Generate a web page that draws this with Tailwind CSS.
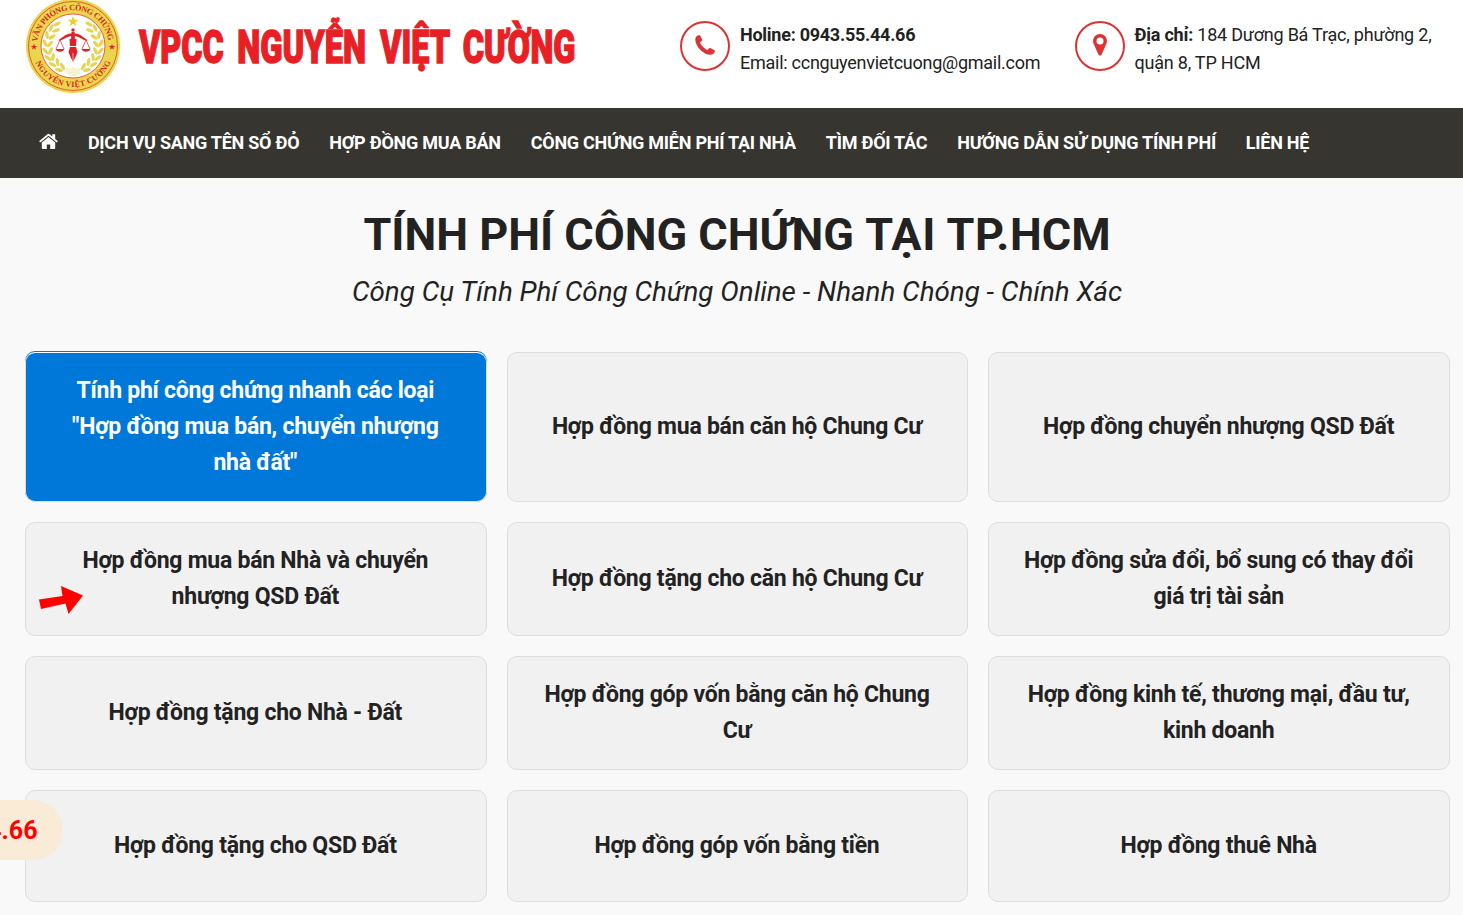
<!DOCTYPE html>
<html lang="vi">
<head>
<meta charset="utf-8">
<title>VPCC Nguyễn Việt Cường</title>
<script src="https://cdn.jsdelivr.net/npm/@tailwindcss/browser@4"></script>
</head>
<body class="h-[915px] overflow-hidden bg-[#f9f9f9] font-['Roboto','Open_Sans',sans-serif] text-[#222]">
<header class="flex h-[108px] bg-white pl-[26px]">
  <svg class="-mt-px h-[94px] w-[94px] shrink-0" viewBox="-47 -47 94 94" aria-label="Văn phòng công chứng Nguyễn Việt Cường">
    <defs>
      <path id="top" d="M-35.500 5A35.850 35.850 0 1 1 35.500 5"/>
      <path id="bottom" d="M-41 0A41 41 0 0 0 41 0"/>
      <path id="star" d="M0-5 1.3-1.6 5-1.6 2 .7 3.1 4.2 0 2.1-3.1 4.2-2 .7-5-1.6-1.3-1.6Z"/>
      <g id="laurel" fill="#e4d554">
        <ellipse cx="-16" cy="-22" rx="4" ry="1.700" transform="rotate(-28 -16 -22)"/>
        <ellipse cx="-22" cy="-18" rx="4" ry="1.700" transform="rotate(-65 -22 -18)"/><ellipse cx="-17" cy="-15.500" rx="4" ry="1.700" transform="rotate(-20 -17 -15.500)"/>
        <ellipse cx="-26" cy="-11" rx="4" ry="1.700" transform="rotate(80 -26 -11)"/><ellipse cx="-21" cy="-9" rx="4" ry="1.700" transform="rotate(-35 -21 -9)"/>
        <ellipse cx="-28" cy="-3" rx="4" ry="1.700" transform="rotate(65 -28 -3)"/><ellipse cx="-23" cy="-2" rx="4" ry="1.700" transform="rotate(-50 -23 -2)"/>
        <ellipse cx="-27.500" cy="5" rx="4" ry="1.700" transform="rotate(50 -27.500 5)"/><ellipse cx="-22.500" cy="5" rx="4" ry="1.700" transform="rotate(-65 -22.500 5)"/>
        <ellipse cx="-25" cy="12" rx="4" ry="1.700" transform="rotate(38 -25 12)"/><ellipse cx="-20" cy="11" rx="4" ry="1.700" transform="rotate(-80 -20 11)"/>
        <ellipse cx="-20.500" cy="18.500" rx="4" ry="1.700" transform="rotate(25 -20.500 18.500)"/><ellipse cx="-15.500" cy="16" rx="4" ry="1.700" transform="rotate(80 -15.500 16)"/>
        <ellipse cx="-14" cy="24" rx="4" ry="1.700" transform="rotate(15 -14 24)"/><ellipse cx="-10.500" cy="20.500" rx="4" ry="1.700" transform="rotate(60 -10.500 20.500)"/>
      </g>
    </defs>
    <circle r="47" fill="#e9d64d"/>
    <circle r="44.500" fill="none" stroke="#e6392f" stroke-width=".8"/>
    <circle r="32" fill="#fff" stroke="#e6392f" stroke-width=".8"/>
    <g fill="#d9242a" font-family="Liberation Serif" font-weight="700" font-size="8.200">
      <text><textPath href="#top" startOffset="9" textLength="103">VĂN PHÒNG CÔNG CHỨNG</textPath></text>
      <text font-size="8"><textPath href="#bottom" startOffset="17" textLength="95">NGUYỄN VIỆT CƯỜNG</textPath></text>
    </g>
    <use href="#star" fill="#d9242a" transform="translate(-39 1) scale(.65)"/>
    <use href="#star" fill="#d9242a" transform="translate(39 1) scale(.65)"/>
    <use href="#star" fill="#e9d02b" transform="translate(0 -24.500) scale(1.080)"/>
    <use href="#laurel"/><use href="#laurel" transform="scale(-1 1)"/>
    <path d="M-6 22V28M-4 23V29M-2 22V30M0 21V30M2 22V30M4 23V29M6 22V28" stroke="#e9df82" stroke-width=".8"/>
    <g fill="#e21f27">
      <circle cy="-16" r="1.700"/>
      <path d="M-1.500-14H1.500L2-6H-2ZM-3.500-7H3.500L3 0H-3ZM-3 1H3L4.500 6 2.500 11 0 16-2.500 11-4.500 6Z"/>
      <path d="M-15-6C-11-7-8-13-1-12.500H1C8-13 11-7 15-6 11-4 7-10 1-10H-1C-7-10-11-4-15-6Z"/>
      <path d="M-17.500 3H-8.500C-10 6.500-16 6.500-17.500 3ZM8.500 3H17.500C16 6.500 10 6.500 8.500 3Z"/>
    </g>
    <path d="M-17 3-13-6-9 3M9 3 13-6 17 3" fill="none" stroke="#e21f27" stroke-width=".7"/>
    <path d="M0 7V15" stroke="#fff" stroke-width=".6"/>
  </svg>
  <svg class="h-[94px] w-[480px] shrink-0" viewBox="120 0 480 94">
    <g transform="scale(.7 1)" fill="#e81f25" stroke="#e81f25" stroke-width="1.500" font-family="Roboto" font-weight="900" font-size="47">
      <text x="198.600" y="63.500" textLength="121" lengthAdjust="spacingAndGlyphs">VPCC</text>
      <text x="339" y="63.500" textLength="184" lengthAdjust="spacingAndGlyphs">NGUYỄN</text>
      <text x="543" y="63.500" textLength="100" lengthAdjust="spacingAndGlyphs">VIỆT</text>
      <text x="661" y="63.500" textLength="161" lengthAdjust="spacingAndGlyphs">CƯỜNG</text>
    </g>
  </svg>
  <div class="ml-20 mt-[21px] flex w-[395px] shrink-0 gap-2.5">
    <span class="flex h-[50px] w-[50px] shrink-0 items-center justify-center rounded-full border-2 border-[#dd3333]">
      <svg class="-mt-0.5 h-5 w-5" viewBox="0 0 20 20" fill="#dd3333"><path d="M.3 4.500C.3 2.400 1.600.8 3.400.3 4.500 0 5 .1 5.300.8L7 4.200C7.500 5.200 7 5.900 5.700 6.800 4.800 7.500 5 8 5.500 8.800 7.200 11.300 8.900 13 11.300 14.500 12.100 15 12.600 15 13.200 14.200 14.200 12.900 14.800 12.600 15.800 13.200L19.100 15C19.900 15.400 20 15.800 19.700 16.800 19.100 18.700 17.500 19.800 15.300 19.800 8.500 19.800.3 11.500.3 4.500Z"/></svg>
    </span>
    <div class="whitespace-nowrap text-[18px] leading-7 tracking-[-0.26px]"><p class="font-bold">Holine: 0943.55.44.66</p><p>Email: ccnguyenvietcuong@gmail.com</p></div>
  </div>
  <div class="mt-[21px] flex shrink-0 gap-[9.500px]">
    <span class="flex h-[50px] w-[50px] shrink-0 items-center justify-center rounded-full border-2 border-[#dd3333]">
      <svg class="-mt-0.5 mr-px h-[22px] w-3.5" viewBox="0 0 14 22" fill="#dd3333"><path fill-rule="evenodd" d="M7 0A7 7 0 0 1 13.500 9.500L8.600 20.500C8 22 6 22 5.400 20.500L.5 9.500A7 7 0 0 1 7 0ZM7 3.500A3.500 3.500 0 1 0 7 10.500 3.500 3.500 0 0 0 7 3.500Z"/></svg>
    </span>
    <div class="whitespace-nowrap text-[18px] leading-7 tracking-[-0.22px]"><p><b>Địa chỉ:</b> 184 Dương Bá Trạc, phường 2,</p><p>quận 8, TP HCM</p></div>
  </div>
</header>
<nav class="flex h-[70px] items-center gap-[29.900px] whitespace-nowrap bg-[#373530] pb-0.5 pl-[39px] text-[18px] font-bold tracking-[-0.25px] text-white">
  <svg class="-mt-px h-[17px] w-[19px]" viewBox="0 0 19 17" fill="#fff"><path d="M9.500 4.100 16.200 9.600V15.200Q16.200 16 15.400 16H11.200V11.500H7.800V16H3.600Q2.800 16 2.800 15.200V9.600ZM.1 8.300 8.400 1.300Q9.500.3 10.600 1.300L13.300 3.600V1.200H16.200V6L18.900 8.300 17.800 9.600 9.500 2.700 1.200 9.600Z"/></svg>
  <a>DỊCH VỤ SANG TÊN SỔ ĐỎ</a><a>HỢP ĐỒNG MUA BÁN</a><a>CÔNG CHỨNG MIỄN PHÍ TẠI NHÀ</a><a>TÌM ĐỐI TÁC</a><a>HƯỚNG DẪN SỬ DỤNG TÍNH PHÍ</a><a>LIÊN HỆ</a>
</nav>
<main class="pl-[25px] pr-[13px] text-center">
  <h1 class="pt-7 pr-px text-[45px] leading-[58px] font-bold">TÍNH PHÍ CÔNG CHỨNG <span class="tracking-[0.600px]">TẠI TP.</span>HCM</h1>
  <p class="mt-[5px] pr-px text-[27.750px] leading-[46px] italic">Công Cụ Tính Phí Công Chứng Online - Nhanh Chóng - Chính Xác</p>
  <div class="mt-[37px] grid grid-cols-3 grid-rows-[150px_114px_114px_112px] gap-5 text-[23px] leading-9 tracking-[-0.25px] font-bold *:flex *:items-center *:justify-center *:rounded-[10px] *:border *:border-[#ddd] *:bg-[#f1f1f1] *:pl-5 *:pr-[21px]">
    <div class="border-t-[#fff]! bg-[#0078d9]! text-white shadow-[0_-1px_0_#0078d9]">Tính phí công chứng nhanh các loại<br>"Hợp đồng mua bán, chuyển nhượng<br>nhà đất"</div>
    <div>Hợp đồng mua bán căn hộ Chung Cư</div>
    <div>Hợp đồng chuyển nhượng QSD Đất</div>
    <div>Hợp đồng mua bán Nhà và chuyển<br>nhượng QSD Đất</div>
    <div>Hợp đồng tặng cho căn hộ Chung Cư</div>
    <div>Hợp đồng sửa đổi, bổ sung có thay đổi<br>giá trị tài sản</div>
    <div>Hợp đồng tặng cho Nhà - Đất</div>
    <div>Hợp đồng góp vốn bằng căn hộ Chung<br>Cư</div>
    <div>Hợp đồng kinh tế, thương mại, đầu tư,<br>kinh doanh</div>
    <div>Hợp đồng tặng cho QSD Đất</div>
    <div>Hợp đồng góp vốn bằng tiền</div>
    <div>Hợp đồng thuê Nhà</div>
  </div>
</main>
<svg class="absolute left-[38px] top-[585px] h-[30px] w-[46px]" viewBox="0 0 46 30" fill="red"><path d="M1 14.500 24.500 11 23 1 45 10.500 30.500 29 27.500 18.500 3 24Z"/></svg>
<div class="absolute left-0 top-[800px] flex h-[60px] w-[63px] items-center justify-end overflow-hidden rounded-r-[30px] bg-[#faebd7] pt-0.5 pr-[25.500px] text-[25px] font-bold text-[red]">0943.55.44.66</div>
</body>
</html>
